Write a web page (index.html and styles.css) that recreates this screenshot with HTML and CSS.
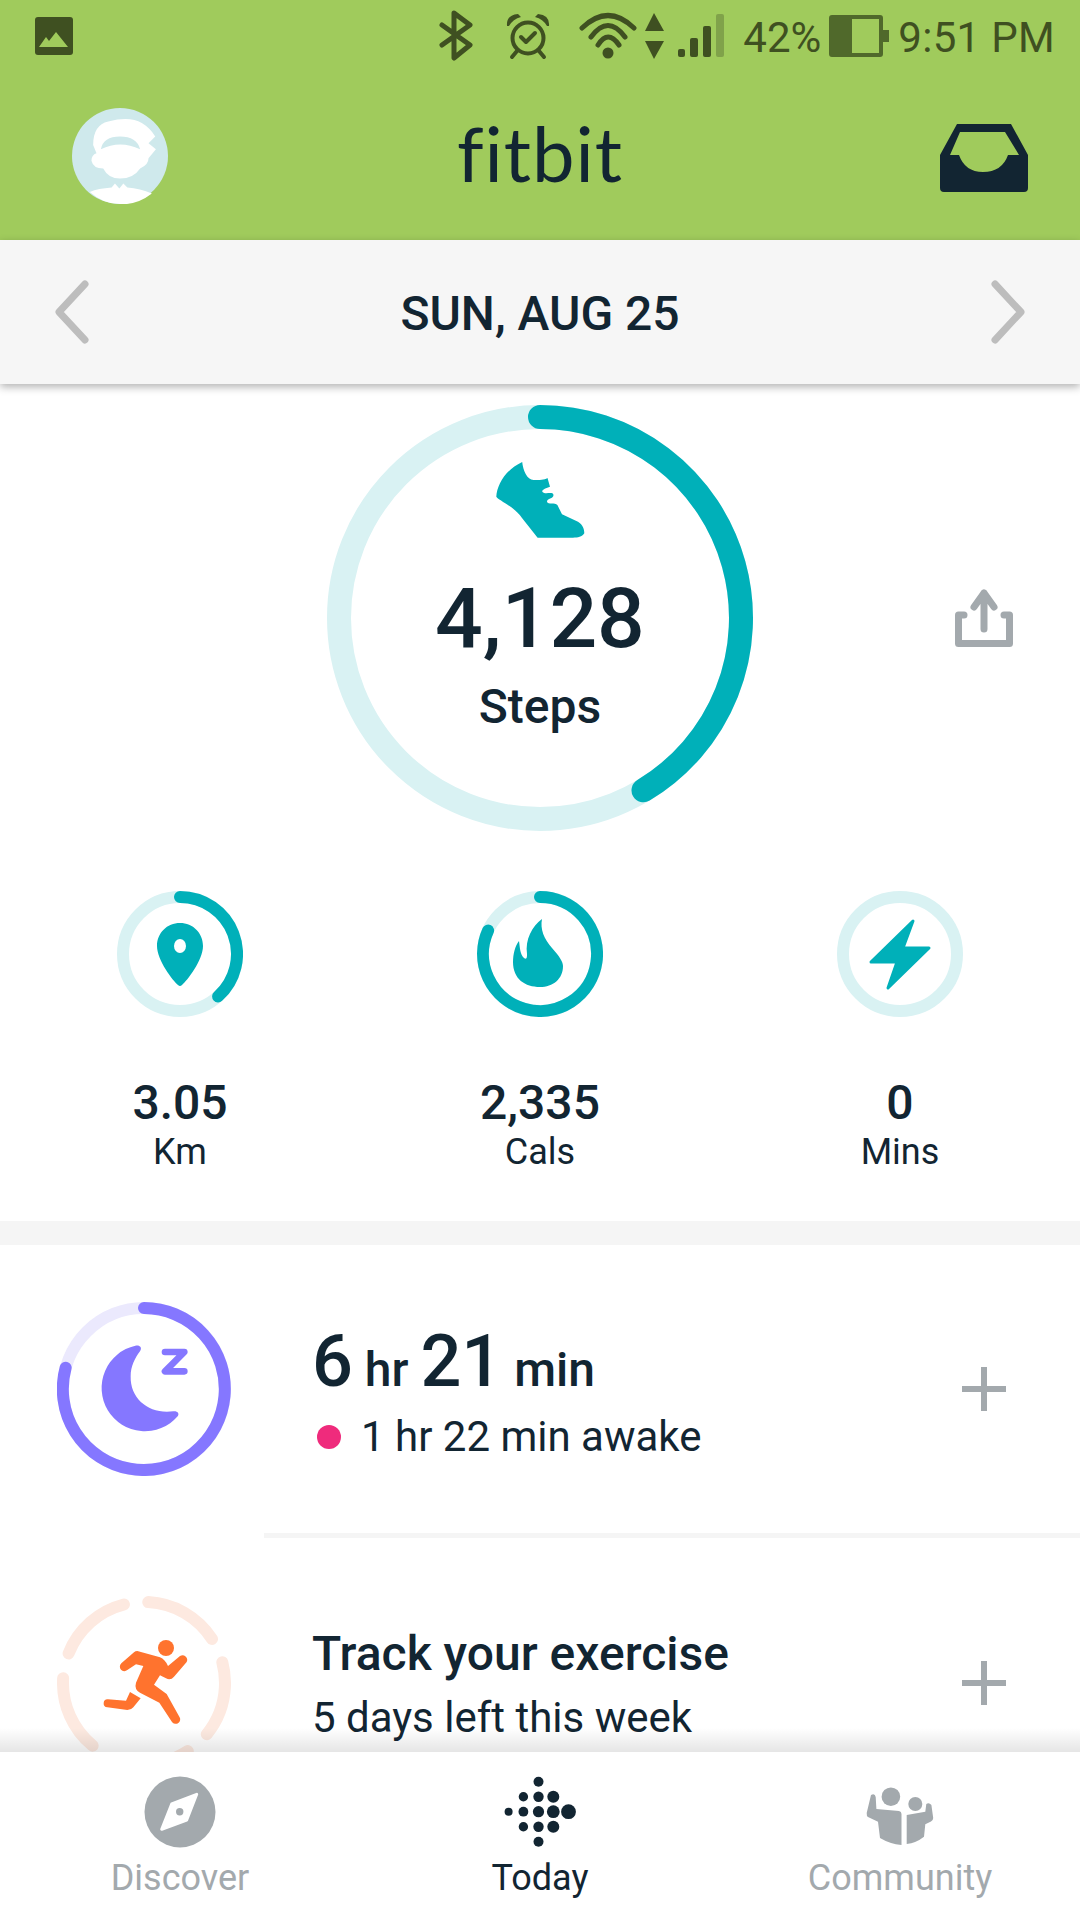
FILE: index.html
```html
<!DOCTYPE html>
<html lang="en">
<head>
<meta charset="utf-8">
<title>Fitbit Today</title>
<link rel="stylesheet" href="styles.css">
</head>
<body>
<div class="app">
  <header class="top">
    <div class="status">
      <svg class="st-img" viewBox="35 17 38 38"><rect class="dark" x="35" y="17" width="38" height="38" rx="3"/><path class="green" d="M39 47 L46 37 L49 41 L56 32 L68 47 Z"/></svg>
      <div class="st-right">
        <svg class="st-cluster" viewBox="436 10 290 52">
          <path class="line" d="M441 25 L469 45 L453 58 V13 L469 25 L441 45"/>
          <circle class="thin" cx="527" cy="38" r="15.5"/>
          <path class="thin" d="M520 37 L525 42 L534 33"/>
          <path class="dark" d="M506 26 Q505 15 517 14 L520 17 Q512 19 508 26Z M548 26 Q549 15 537 14 L534 17 Q542 19 546 26Z"/>
          <path class="thin" d="M516 51 L511 57 M538 51 L543 57"/>
          <circle class="dark" cx="607" cy="53" r="5.5"/>
          <path class="line" d="M581 28 Q607 3 633 28 M590 37 Q607 14 624 37 M597 45 Q607 29 618 45"/>
          <path class="dark" d="M653 13 L663 31 H644 Z M644 41 H663 L653 59 Z"/>
          <rect class="dark" x="677" y="49" width="7" height="8" rx="2"/>
          <rect class="dark" x="689" y="38" width="8" height="19" rx="2"/>
          <rect class="dark" x="702" y="26" width="8" height="31" rx="2"/>
          <rect class="faint" x="715" y="14" width="8" height="43" rx="2"/>
        </svg>
        <span class="st-text st-pct">42%</span>
        <svg class="st-batt" viewBox="827 15 60 42"><rect class="batt-fill" x="829" y="17" width="21" height="38"/><rect class="batt-box" x="829" y="17" width="50" height="38" rx="1"/><rect class="batt-nub" x="881" y="30" width="6" height="12"/></svg>
        <span class="st-text st-time">9:51 PM</span>
      </div>
    </div>
    <div class="toolbar">
      <svg class="avatar" viewBox="97 55 286 286">
        <circle class="av-bg" cx="240" cy="198" r="143"/>
        <path class="av-w" d="M160 165 Q160 105 205 95 Q270 78 305 100 Q330 115 345 140 L325 160 L347 178 L325 205 Q325 225 300 235 Q280 265 240 265 Q205 265 190 235 Q160 235 155 212 Q155 195 170 190 Z"/>
        <path class="av-bg" d="M183 178 Q190 140 240 140 Q290 140 300 178 Q240 150 183 178Z"/>
        <path class="av-w" d="M150 305 Q175 295 215 292 L225 280 L238 295 L250 280 L262 292 Q300 295 335 310 Q290 345 240 341 Q190 341 150 305Z"/>
      </svg>
      <div class="logo">fitbit</div>
      <svg class="inbox" viewBox="941 124 88 68"><path class="navy" fill-rule="evenodd" d="M958 124 H1012 L1029 155 V188 Q1029 192 1025 192 H945 Q941 192 941 188 V155 Z M961 132 L951 155 H960 Q966 172 984 172 Q1003 172 1009 155 H1020 L1006 132 Z"/></svg>
    </div>
  </header>

  <div class="datebar">
    <svg class="chev" viewBox="0 0 36 66"><path d="M31 5 L5 33 L31 61"/></svg>
    <div class="date">SUN, AUG 25</div>
    <svg class="chev" viewBox="0 0 36 66"><path d="M5 5 L31 33 L5 61"/></svg>
  </div>

  <main class="scroll">
    <section class="steps">
      <div class="steps-grid">
        <div class="ring-big">
          <svg class="ring-svg" viewBox="0 0 426 426">
            <circle class="track" cx="213" cy="213" r="201" stroke-width="24"/>
            <path class="prog" stroke-width="24" d="M213 12 A201 201 0 0 1 316.5 385.3"/>
          </svg>
          <div class="ring-text">
            <svg class="shoe" viewBox="490 458 100 84"><path class="teal" d="M522.2 462 C523 470 527 480 533.6 480 C540 480 544 480 547.5 478 L550 486.7 C546 488 541 490 542.5 492 C545 495 553 491 553.5 495 C553.5 499 547 498 547 501.7 C548 505 555 502 557.4 505 L562 514.3 L578 521.7 C583 525 584.3 529 584.3 533.3 C582 537 578 537.7 573 537.7 L537.6 537.7 L522 518 C515 507 498 500 496.3 496.7 C497 485 505 470 522.2 462Z"/></svg>
            <div class="big-num">4,128</div>
            <div class="big-label">Steps</div>
          </div>
        </div>
        <svg class="share" viewBox="955 589 58 58">
          <path class="grey-line" d="M984 593 V629 M974 607 L984 593 L994 607"/>
          <path class="grey-line" d="M964 615 H958.5 V643.5 H1009.5 V615 H1004"/>
        </svg>
      </div>
      <div class="stats">
        <div class="stat">
          <svg class="stat-ring" viewBox="-63 -63 126 126">
            <circle class="track" r="57" stroke-width="12"/>
            <path class="prog" stroke-width="12" d="M0 -57 A57 57 0 0 1 38.1 42.4"/>
            <path class="teal" fill-rule="evenodd" d="M0 -31 C13 -31 23 -21 23 -8 C23 6 7 27 2 31 Q0 33 -2 31 C-7 27 -23 6 -23 -8 C-23 -21 -13 -31 0 -31Z M0 -15 A6 7 0 0 0 0 -1 A6 7 0 0 0 0 -15Z"/>
          </svg>
          <div class="stat-num">3.05</div>
          <div class="stat-label">Km</div>
        </div>
        <div class="stat">
          <svg class="stat-ring" viewBox="-63 -63 126 126">
            <circle class="track" r="57" stroke-width="12"/>
            <path class="prog" stroke-width="12" d="M0 -57 A57 57 0 1 1 -51.9 -23.5"/>
            <path class="teal" d="M2 -35 C0 -25 4 -15 12 -6 C20 3 23 8 23 12 C23 25 13 33 0 33 C-15 33 -27 25 -27 8 C-27 0 -25 -8 -21 -13 C-20 -6 -20 0 -16 4 C-13 6 -13 3 -13 0 C-15 -14 -8 -28 2 -35Z"/>
          </svg>
          <div class="stat-num">2,335</div>
          <div class="stat-label">Cals</div>
        </div>
        <div class="stat">
          <svg class="stat-ring" viewBox="-63 -63 126 126">
            <circle class="track" r="57" stroke-width="12"/>
            <path class="bolt" d="M13 -33 L3 -6 H29 L-12 34 L-3 8 H-29 Z"/>
          </svg>
          <div class="stat-num">0</div>
          <div class="stat-label">Mins</div>
        </div>
      </div>
    </section>

    <section class="rows">
      <div class="row">
        <svg class="row-ring" viewBox="81 97 522 522">
          <circle class="sleep-track" cx="342" cy="358" r="243" stroke-width="36"/>
          <path class="sleep-prog" stroke-width="36" d="M342 115 A243 243 0 1 1 107 294"/>
          <path class="sleep" d="M316 228 A130 130 0 1 0 443 440 C450 430 440 423 430 425 C360 435 300 390 302 320 C302 290 315 265 330 245 C338 232 328 225 316 228Z"/>
          <path class="sleep-z" d="M405 247 H463 L405 305 H463"/>
        </svg>
        <div class="row-text sleep-text">
          <div class="sleep-main"><span class="sl-big">6</span> <span class="sl-unit">hr</span> <span class="sl-big">21</span> <span class="sl-unit">min</span></div>
          <div class="sleep-sub"><span class="dot"></span>1 hr 22 min awake</div>
        </div>
        <svg class="plus" viewBox="0 0 44 44"><path d="M22 0 V44 M0 22 H44"/></svg>
      </div>
      <div class="row-divider"></div>
      <div class="row row-ex">
        <svg class="row-ring" viewBox="81 78 522 522">
          <circle class="ex-track" cx="342" cy="339" r="243" stroke-width="36" transform="rotate(-87 342 339)"/>
          <circle class="ex-head" cx="408" cy="234" r="24"/>
          <path class="ex-run" d="M322 243 L390 262 Q405 268 414 288 L450 258 A14 14 0 0 1 470 276 L432 320 Q422 332 408 325 L390 316 L372 344 L410 372 L448 440 A13 13 0 0 1 426 456 L388 398 L330 368 Q312 358 318 338 L340 288 L318 283 L292 300 A13 13 0 0 1 274 280 L312 247 Q316 243 322 243Z"/>
          <path class="ex-run" d="M300 366 L332 385 L310 412 Q304 420 292 420 L232 412 A12 12 0 0 1 234 388 L288 392Z"/>
        </svg>
        <div class="row-text ex-text">
          <div class="ex-title">Track your exercise</div>
          <div class="ex-sub">5 days left this week</div>
        </div>
        <svg class="plus" viewBox="0 0 44 44"><path d="M22 0 V44 M0 22 H44"/></svg>
      </div>
    </section>
  </main>

  <nav class="nav">
    <div class="tab">
      <svg class="tab-icon" viewBox="144 1776 72 72">
        <circle class="g" cx="180" cy="1812" r="35.5"/>
        <path class="w" d="M196.7 1794.3 L186.7 1820 L161.7 1829.3 L171.7 1804Z"/>
        <circle class="g" cx="179.7" cy="1811.7" r="3.7"/>
      </svg>
      <div class="tab-label">Discover</div>
    </div>
    <div class="tab tab-on">
      <svg class="tab-icon" viewBox="504 1776 72 72">
        <circle class="navy" cx="508.6" cy="1811.7" r="4"/>
        <circle class="navy" cx="523.4" cy="1796.7" r="4.7"/><circle class="navy" cx="523.4" cy="1811.7" r="4.9"/><circle class="navy" cx="523.4" cy="1826.7" r="4.7"/>
        <circle class="navy" cx="538.5" cy="1781.7" r="5"/><circle class="navy" cx="538.5" cy="1796.7" r="5.2"/><circle class="navy" cx="538.5" cy="1811.7" r="5.6"/><circle class="navy" cx="538.5" cy="1826.7" r="5.2"/><circle class="navy" cx="538.5" cy="1841.7" r="5"/>
        <circle class="navy" cx="553.3" cy="1796.7" r="6"/><circle class="navy" cx="553.3" cy="1811.7" r="6.4"/><circle class="navy" cx="553.3" cy="1826.7" r="6"/>
        <circle class="navy" cx="568.5" cy="1811.7" r="7.4"/>
      </svg>
      <div class="tab-label">Today</div>
    </div>
    <div class="tab">
      <svg class="tab-icon" viewBox="864 1776 72 72">
        <circle class="g" cx="890.9" cy="1796.7" r="9.3"/>
        <circle class="g" cx="915.3" cy="1804" r="7"/>
        <path class="g" d="M871 1795 Q875 1793 875.7 1797 L876.4 1809 L899 1811 Q901.5 1811.5 901.5 1814 V1845 Q890 1844 880 1838 L878 1821.7 L868 1817 Q866.5 1816 866.7 1813 Z"/>
        <path class="g" d="M906.7 1815 L925.3 1811.7 L926.3 1804 Q929 1802 931.4 1805 L933.2 1818 Q933 1821 931 1821.5 L925.3 1824.3 L924 1836.7 Q916 1843 906.7 1844 Z"/>
      </svg>
      <div class="tab-label">Community</div>
    </div>
  </nav>
</div>
</body>
</html>
```

FILE: styles.css
```css
* { box-sizing: border-box; }
html, body { margin: 0; padding: 0; }
body { font-family: Roboto, "Liberation Sans", sans-serif; color: #122532; background: #fff; }
svg { display: block; flex-shrink: 0; }
.app { width: 1080px; height: 1920px; display: flex; flex-direction: column; overflow: hidden; }

.top { background: #a0cb5c; height: 240px; flex-shrink: 0; }
.status { height: 72px; display: flex; align-items: flex-start; justify-content: space-between; padding: 0 25px 0 35px; color: #3f5021; }
.st-img { width: 38px; height: 38px; margin-top: 17px; }
.st-right { display: flex; align-items: flex-start; }
.st-cluster { width: 290px; height: 52px; margin-top: 10px; }
.st-text { font-size: 42px; line-height: 76px; }
.st-pct { margin-left: 16px; width: 80px; }
.st-batt { width: 60px; height: 42px; margin: 15px 0 0 6px; }
.st-time { margin-left: 9px; letter-spacing: .3px; }
.dark { fill: #3f5021; }
.green { fill: #a0cb5c; }
.faint { fill: #80a24a; }
.line { fill: none; stroke: #3f5021; stroke-width: 5; stroke-linecap: round; stroke-linejoin: round; }
.thin { fill: none; stroke: #3f5021; stroke-width: 4; stroke-linecap: round; stroke-linejoin: round; }
.batt-fill { fill: #50692b; }
.batt-box { fill: none; stroke: #50692b; stroke-width: 4; }
.batt-nub { fill: #50692b; }

.toolbar { height: 168px; display: grid; grid-template-columns: 1fr auto 1fr; align-items: center; padding: 0 52px; }
.avatar { width: 96px; height: 96px; margin-left: 20px; }
.av-bg { fill: #cfe9ec; }
.av-w { fill: #fff; }
.logo { font-family: Lato, sans-serif; font-weight: 400; font-size: 76px; line-height: 90px; letter-spacing: 1px; color: #122532; margin-bottom: 6px; }
.inbox { width: 88px; height: 68px; justify-self: end; margin-top: 4px; }
.navy { fill: #122532; }

.datebar { height: 144px; background: #f6f6f6; display: flex; align-items: center; justify-content: space-between; padding: 0 54px; box-shadow: 0 3px 8px rgba(0,0,0,.3); flex-shrink: 0; position: relative; z-index: 1; }
.date { font-size: 48px; font-weight: 500; line-height: 52px; margin-top: 4px; }
.chev { width: 36px; height: 66px; }
.chev path { fill: none; stroke: #bdbdbd; stroke-width: 7; stroke-linecap: round; stroke-linejoin: round; }

.scroll { flex: 1; min-height: 0; overflow: hidden; }
.steps { height: 837px; padding-top: 21px; }
.steps-grid { display: grid; grid-template-columns: 1fr 426px 1fr; align-items: center; }
.ring-big { grid-column: 2; display: grid; width: 426px; height: 426px; }
.ring-svg { grid-area: 1 / 1; width: 426px; height: 426px; }
.ring-text { grid-area: 1 / 1; display: flex; flex-direction: column; align-items: center; padding-top: 53px; }
.track { fill: none; stroke: #d9f2f3; }
.prog { fill: none; stroke: #00b0b9; stroke-linecap: round; }
.teal { fill: #00b0b9; }
.shoe { width: 100px; height: 84px; }
.big-num { font-size: 84px; line-height: 90px; font-weight: 500; margin-top: 32px; }
.big-label { font-size: 48px; line-height: 50px; font-weight: 500; margin-top: 18px; }
.share { grid-column: 3; width: 58px; height: 58px; justify-self: end; margin-right: 67px; }
.grey-line { fill: none; stroke: #a3a9ad; stroke-width: 7; stroke-linecap: round; stroke-linejoin: round; }

.stats { display: grid; grid-template-columns: repeat(3, 1fr); margin-top: 60px; }
.stat { display: flex; flex-direction: column; align-items: center; }
.stat-ring { width: 126px; height: 126px; }
.bolt { fill: #00b0b9; stroke: #00b0b9; stroke-width: 3; stroke-linejoin: round; }
.stat-num { font-size: 48px; line-height: 50px; font-weight: 500; margin-top: 61px; }
.stat-label { font-size: 36px; line-height: 40px; margin-top: 4px; }

.rows { border-top: 24px solid #f5f5f5; }
.row { display: flex; align-items: center; height: 288px; padding: 0 74px 0 57px; }
.row-ex { height: 289px; }
.row-ring { width: 174px; height: 174px; }
.row-text { margin-left: 81px; }
.row-divider { height: 5px; margin-left: 264px; background: #f5f5f5; }
.plus { width: 44px; height: 44px; margin-left: auto; }
.plus path { fill: none; stroke: #a3a9ad; stroke-width: 6; }

.sleep-track { fill: none; stroke: #ebe9fd; }
.sleep-prog { fill: none; stroke: #8577ff; stroke-linecap: round; }
.sleep { fill: #8577ff; }
.sleep-z { fill: none; stroke: #8577ff; stroke-width: 20; stroke-linecap: round; stroke-linejoin: round; }
.sleep-text { padding-top: 10px; }
.sleep-main { font-size: 48px; line-height: 68px; font-weight: 500; white-space: nowrap; }
.sl-big { font-size: 72px; }
.sl-unit { font-size: 48px; }
.sleep-sub { font-size: 42px; line-height: 48px; margin-top: 9px; display: flex; align-items: center; white-space: nowrap; }
.dot { width: 24px; height: 24px; border-radius: 50%; background: #ef2b7c; margin: 0 20px 0 5px; }

.ex-track { fill: none; stroke: #fde9e0; stroke-dasharray: 229 76.4; stroke-linecap: round; }
.ex-head, .ex-run { fill: #ff732e; }
.ex-text { padding-top: 3px; }
.ex-title { font-size: 48px; line-height: 54px; font-weight: 500; white-space: nowrap; }
.ex-sub { font-size: 42px; line-height: 48px; margin-top: 13px; white-space: nowrap; }

.nav { height: 168px; flex-shrink: 0; display: grid; grid-template-columns: repeat(3, 1fr); background: #fff; padding-top: 24px; position: relative; }
.nav::before { content: ""; position: absolute; left: 0; right: 0; top: -24px; height: 24px; background: linear-gradient(to bottom, rgba(0,0,0,0), rgba(0,0,0,.1)); }
.tab { display: flex; flex-direction: column; align-items: center; color: #a3a9ad; }
.tab-on { color: #122532; }
.tab-icon { width: 72px; height: 72px; overflow: visible; }
.tab-label { font-size: 36px; line-height: 44px; margin-top: 8px; }
.g { fill: #a3a9ad; }
.w { fill: #fff; stroke: #fff; stroke-width: 3; stroke-linejoin: round; }
```
